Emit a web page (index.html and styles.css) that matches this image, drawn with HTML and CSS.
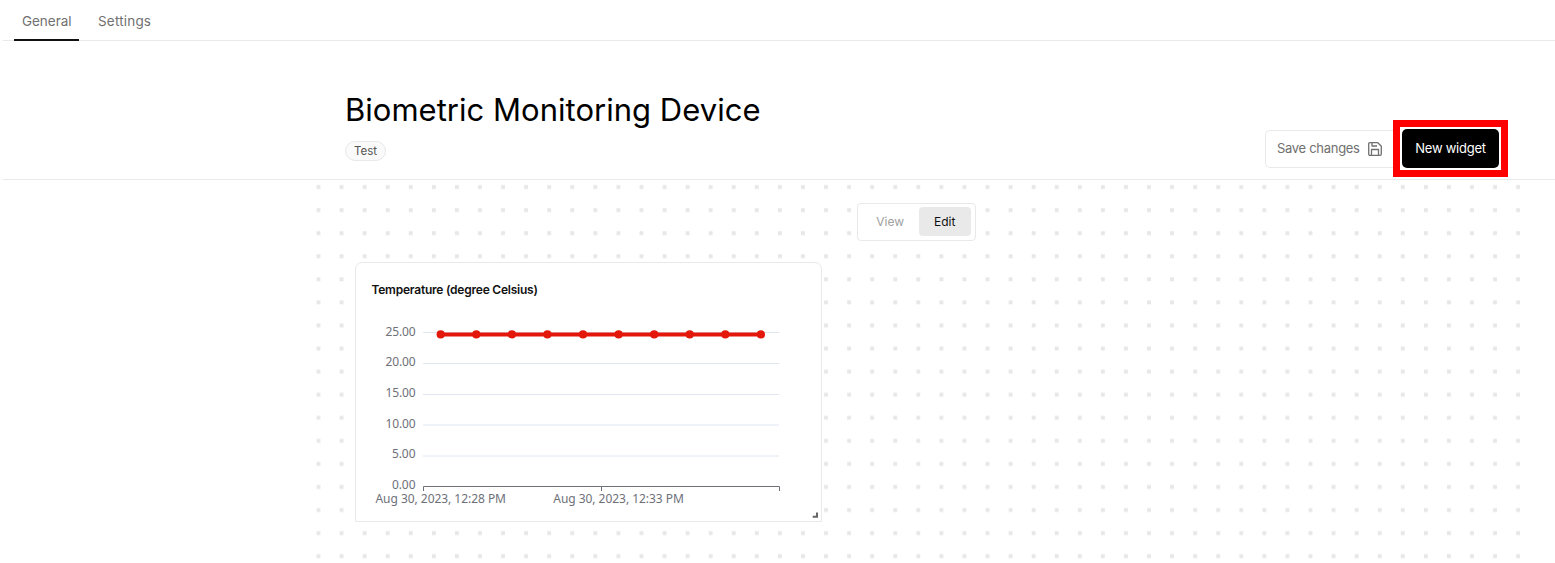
FILE: index.html
```
<!DOCTYPE html>
<html lang="en">
<head>
<meta charset="utf-8">
<title>Biometric Monitoring Device</title>
<link rel="stylesheet" href="styles.css">
</head>
<body>
<nav class="tabs">
  <a class="tab tab-active"><svg class="tab-label" width="50" height="20"><text x="0" y="15" textLength="49.5">General</text></svg></a>
  <a class="tab"><svg class="tab-label" width="54" height="20"><text x="0" y="15" textLength="53">Settings</text></svg></a>
</nav>
<header class="hero">
  <div class="heading">
    <h1 class="title">Biometric Monitoring Device</h1>
    <span class="tag">Test</span>
  </div>
  <div class="actions">
    <button class="save"><span>Save changes</span>
      <svg class="save-icon" viewBox="0 0 14 14" width="14" height="14">
        <path d="M2 .7H9.8L13.3 4.200V12Q13.3 13.3 12 13.3H2Q.7 13.3 .7 12V2Q.7 .7 2 .7ZM4 .7V4H9M3.500 13.300V7.500H10.500V13.300"/>
      </svg>
    </button>
    <div class="highlight"><button class="new-widget">New widget</button></div>
  </div>
</header>
<main class="canvas">
  <svg class="dots" width="1224" height="383">
    <defs><pattern id="dot" width="23.07" height="23.07" patternUnits="userSpaceOnUse">
      <rect x="9.5" y="5.100" width="3.900" height="3.900" fill="#e7e7e7"/>
    </pattern></defs>
    <rect width="1224" height="383" fill="url(#dot)"/>
  </svg>
  <div class="mode">
    <button class="mode-option">View</button>
    <button class="mode-option mode-active">Edit</button>
  </div>
  <section class="card">
    <h2 class="card-title">Temperature (degree Celsius)</h2>
    <svg class="chart" width="465" height="210" viewBox="356 310 465 210">
      <path class="gridline" d="M423 332.500H779M423 363.500H779M423 394.500H779M423 425H779M423 456H779"/>
      <path class="axis" d="M423.500 491V486.500H779.500V491M601.500 486V491"/>
      <g class="y-label">
        <text x="415.500" y="335.500" textLength="30">25.00</text>
        <text x="415.500" y="366.300" textLength="30">20.00</text>
        <text x="415.500" y="397" textLength="30">15.00</text>
        <text x="415.500" y="427.800" textLength="30">10.00</text>
        <text x="415.500" y="458.400" textLength="23.500">5.00</text>
        <text x="415.500" y="489.400" textLength="23.500">0.00</text>
      </g>
      <g class="x-label">
        <text x="375.500" y="503" textLength="130.500">Aug 30, 2023, 12:28 PM</text>
        <text x="553.300" y="503" textLength="130.500">Aug 30, 2023, 12:33 PM</text>
      </g>
      <path class="series" d="M440.700 334.400H761"/>
      <g class="points">
        <circle cx="440.700" cy="334.400" r="4.100"/><circle cx="476.300" cy="334.400" r="4.100"/>
        <circle cx="511.900" cy="334.400" r="4.100"/><circle cx="547.400" cy="334.400" r="4.100"/>
        <circle cx="583" cy="334.400" r="4.100"/><circle cx="618.600" cy="334.400" r="4.100"/>
        <circle cx="654.200" cy="334.400" r="4.100"/><circle cx="689.700" cy="334.400" r="4.100"/>
        <circle cx="725.300" cy="334.400" r="4.100"/><circle cx="760.900" cy="334.400" r="4.100"/>
      </g>
      <path class="resize" d="M812.700 516.800H817V512.500"/>
    </svg>
  </section>
</main>
</body>
</html>
```
FILE: styles.css
```
* { box-sizing: border-box; }
body { margin: 0; background: #fff; font-family: Inter, sans-serif; overflow: hidden; }
button { font: inherit; margin: 0; padding: 0; border: 0; }
.tabs { display: flex; gap: 11px; height: 41px; margin-left: 3px; padding-left: 11px; border-bottom: 1px solid #e9e9e9; }
.tab { height: 41px; padding: 11px 7px 0 8px; color: #707070; font-size: 13.5px; border-bottom: 2px solid transparent; }
.tab-active { border-color: #111; }
.tab-label { display: block; fill: #707070; overflow: visible; }
.hero { display: flex; justify-content: space-between; height: 139px; margin-left: 3px; padding: 50px 47px 0 342px; border-bottom: 1px solid #e9e9e9; }
.title { margin: 0; font-size: 31px; line-height: 38px; font-weight: 400; letter-spacing: .02px; color: #000; white-space: nowrap; }
.tag { display: flex; align-items: center; justify-content: center; width: 41px; height: 20px; margin-top: 12px; border: 1px solid #e9e9e9; border-radius: 10px; background: #fafafa; color: #555; font-size: 11.500px; }
.actions { display: flex; padding-top: 29px; }
.save { display: flex; align-items: center; gap: 8px; width: 128px; height: 38px; margin-top: 10px; padding-left: 11px; border: 1px solid #e9e9e9; border-right: 0; border-radius: 5px 0 0 5px; background: #fff; color: #707070; font-size: 13px; letter-spacing: -.3px; white-space: nowrap; }
.save span { padding-bottom: 2px; }
.save-icon { fill: none; stroke: #707070; stroke-width: 1.3; stroke-linejoin: round; }
.highlight { display: flex; align-items: center; justify-content: center; width: 115px; height: 57px; border: 7px solid #f00; background: #fff; }
.new-widget { width: 97px; height: 39px; padding-bottom: 2px; border-radius: 5px; background: #000; color: #fff; font-size: 13px; letter-spacing: -.25px; white-space: nowrap; }
.canvas { position: relative; display: flex; flex-direction: column; align-items: flex-start; height: 383px; padding: 23px 0 0 355px; }
.dots { position: absolute; left: 306.6px; top: 0; z-index: -1; }
.mode { display: flex; align-items: center; width: 119px; height: 38px; margin-left: 501.500px; padding: 0 4px 1px; border: 1px solid #e9e9e9; border-radius: 4px; background: #fff; }
.mode-option { width: 58px; height: 29px; padding-bottom: 1px; border-radius: 4px; background: transparent; color: #a0a0a0; font-size: 12px; }
.mode-active { width: 52px; background: #e9e9e9; color: #111; }
.card { width: 467px; height: 259.500px; margin-top: 21px; border: 1px solid #e9e9e9; border-radius: 7px 7px 0 0; background: #fff; }
.card-title { margin: 0; padding: 19px 0 0 15.500px; height: 47px; font-size: 12px; line-height: 16px; font-weight: 600; letter-spacing: -.23px; color: #111; white-space: nowrap; }
.chart { display: block; }
.gridline { fill: none; stroke: #e0e6f1; stroke-width: 1; }
.axis { fill: none; stroke: #6e7079; stroke-width: 1; }
.y-label, .x-label { font-family: "Noto Sans", "Open Sans", sans-serif; font-size: 12px; fill: #6e7079; }
.y-label { text-anchor: end; }
.series { fill: none; stroke: #e3170a; stroke-width: 4; }
.points { fill: #e3170a; }
.resize { fill: none; stroke: #666; stroke-width: 2; }
```
